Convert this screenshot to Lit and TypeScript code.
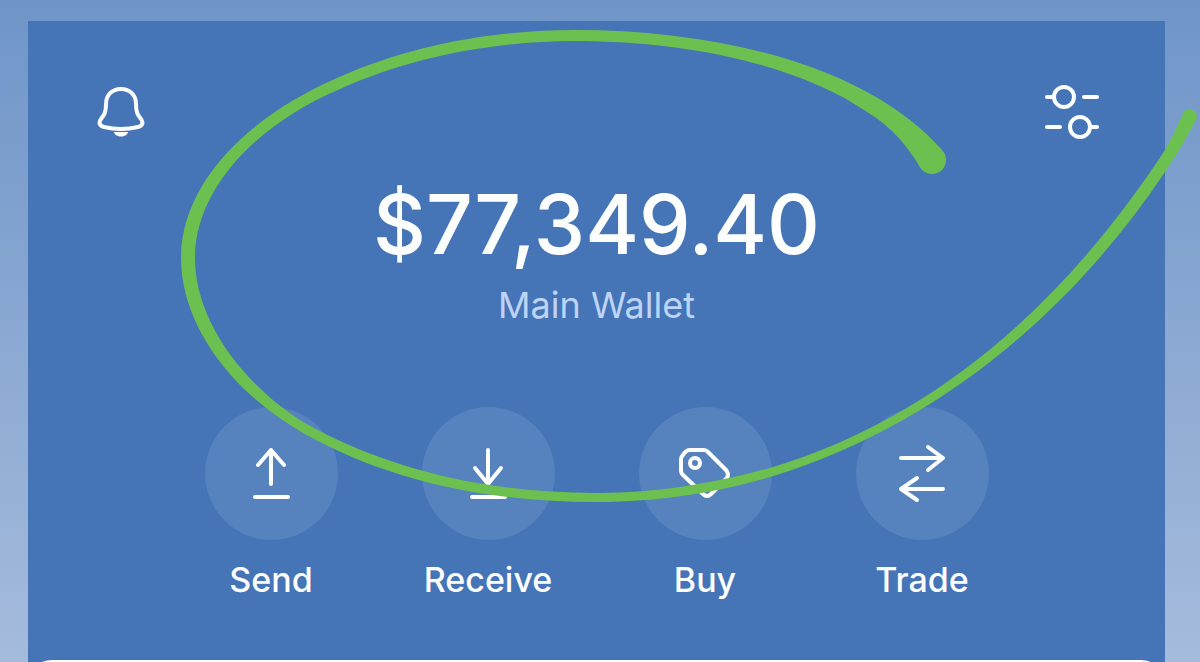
import { LitElement, html, css, svg } from "lit";
import { customElement } from "lit/decorators.js";

const ACTIONS = [
  {
    label: "Send",
    icon: svg`<path d="M32 42V8M19 23L32 8L45 23M16 55H49" />`,
  },
  {
    label: "Receive",
    icon: svg`<path d="M32 8V42M19 26L32 42L45 26M16 55H49" />`,
  },
  {
    label: "Buy",
    icon: svg`<path d="M17 8H31Q33 8 35 10L53 28Q57 33 53 37L38 52Q34 56 30 52L10 33Q8 31 8 29V17Q8 15 10 13Q13 8 17 8Z" />
      <circle cx="22" cy="21" r="5" />`,
  },
  {
    label: "Trade",
    icon: svg`<path d="M11 16H53M38 5L53 16L38 28M53 47H11M27 36L11 47L27 58" />`,
  },
];

@customElement("app-root")
export class AppRoot extends LitElement {
  static styles = css`
    :host {
      display: block;
      font-family: Inter, "Liberation Sans", sans-serif;
      color: #fdffff;
    }
    .page {
      position: relative;
      box-sizing: border-box;
      display: flex;
      height: 100vh;
      padding: 21px 35px 0 28px;
      overflow: hidden;
      background: linear-gradient(#6f95c8, #a5bbdc);
    }
    .wallet {
      flex: 1;
      display: flex;
      flex-direction: column;
      overflow: hidden;
      background: #4574b7;
    }
    .toolbar {
      display: flex;
      justify-content: space-between;
      padding: 60px 61px 0;
    }
    button {
      padding: 0;
      border: 0;
      background: none;
      color: inherit;
      font: inherit;
      cursor: pointer;
    }
    svg {
      display: block;
      fill: none;
      stroke: currentColor;
      stroke-width: 4;
      stroke-linecap: round;
      stroke-linejoin: round;
    }
    .tool {
      width: 64px;
      height: 64px;
    }
    .solid {
      fill: currentColor;
      stroke: none;
    }
    .balance {
      display: flex;
      flex-direction: column;
      align-items: center;
      padding-top: 30px;
    }
    .amount {
      margin: 0;
      font-size: 82px;
      line-height: 100px;
      font-weight: 500;
    }
    .name {
      margin: 0;
      padding-top: 10px;
      font-size: 36px;
      line-height: 40px;
      color: #bdd5f7;
    }
    .actions {
      display: grid;
      grid-template-columns: repeat(4, 133px);
      justify-content: center;
      gap: 84px;
      padding-top: 82px;
    }
    .action {
      display: flex;
      flex-direction: column;
      align-items: center;
      gap: 20px;
    }
    .disc {
      display: grid;
      place-items: center;
      width: 133px;
      height: 133px;
      border-radius: 50%;
      background: #5682bd;
    }
    .glyph {
      width: 64px;
      height: 64px;
    }
    .label {
      font-size: 34px;
      line-height: 40px;
      font-weight: 500;
    }
    .sheet {
      flex: none;
      height: 80px;
      margin-top: 60px;
      border-radius: 24px;
      background: #fdffff;
    }
    .swoosh {
      position: absolute;
      top: 0;
      left: 0;
      width: 100%;
      fill: #6cc04f;
      stroke: none;
      pointer-events: none;
    }
  `;

  render() {
    return html`
      <main class="page">
        <section class="wallet">
          <div class="toolbar">
            <button class="tool" aria-label="Notifications">
              <svg viewBox="0 0 64 64">
                <path d="M32 8C23 8 17 14 17 23C17 32 15 34 12 38Q8 44 15 46Q32 50 49 46Q56 44 52 38C49 34 47 32 47 23C47 14 41 8 32 8Z" />
                <path class="solid" d="M25 51H39C38 57 26 57 25 51Z" />
              </svg>
            </button>
            <button class="tool" aria-label="Wallet settings">
              <svg viewBox="0 0 64 64">
                <circle cx="24" cy="16" r="10" />
                <circle cx="40" cy="46" r="10" />
                <path d="M7 16H13M44 16H57M7 46H20M51 46H57" />
              </svg>
            </button>
          </div>
          <div class="balance">
            <h1 class="amount">$77,349.40</h1>
            <p class="name">Main Wallet</p>
          </div>
          <nav class="actions" aria-label="Wallet actions">
            ${ACTIONS.map(
              (a) => html`
                <button class="action">
                  <span class="disc">
                    <svg class="glyph" viewBox="0 0 64 64" aria-hidden="true">${a.icon}</svg>
                  </span>
                  <span class="label">${a.label}</span>
                </button>
              `
            )}
          </nav>
          <div class="sheet"></div>
        </section>
        <svg class="swoosh" viewBox="0 0 1200 662" aria-hidden="true">
          <path
            d="M942 150C932 139 922 129 910 120C830 57 700 30 575 30C500 30 415 43 337 78C245 118 181 185 181 258C181 320 225 388 303 433C390 482 490 502 597 502C660 502 720 492 770 477C940 426 1075 307 1165 172C1177 154 1187 137 1196 120A7 7 0 0 0 1183 113C1178 125 1172 138 1165 150C1060 310 930 420 770 468C715 483 660 493 597 493C490 493 390 471 303 422C235 378 195 315 195 258C195 190 255 125 340 89C415 55 500 41 575 41C690 41 800 66 867 112C892 127 907 146 920 167Z"
          />
          <circle cx="932" cy="160" r="14" />
        </svg>
      </main>
    `;
  }
}
